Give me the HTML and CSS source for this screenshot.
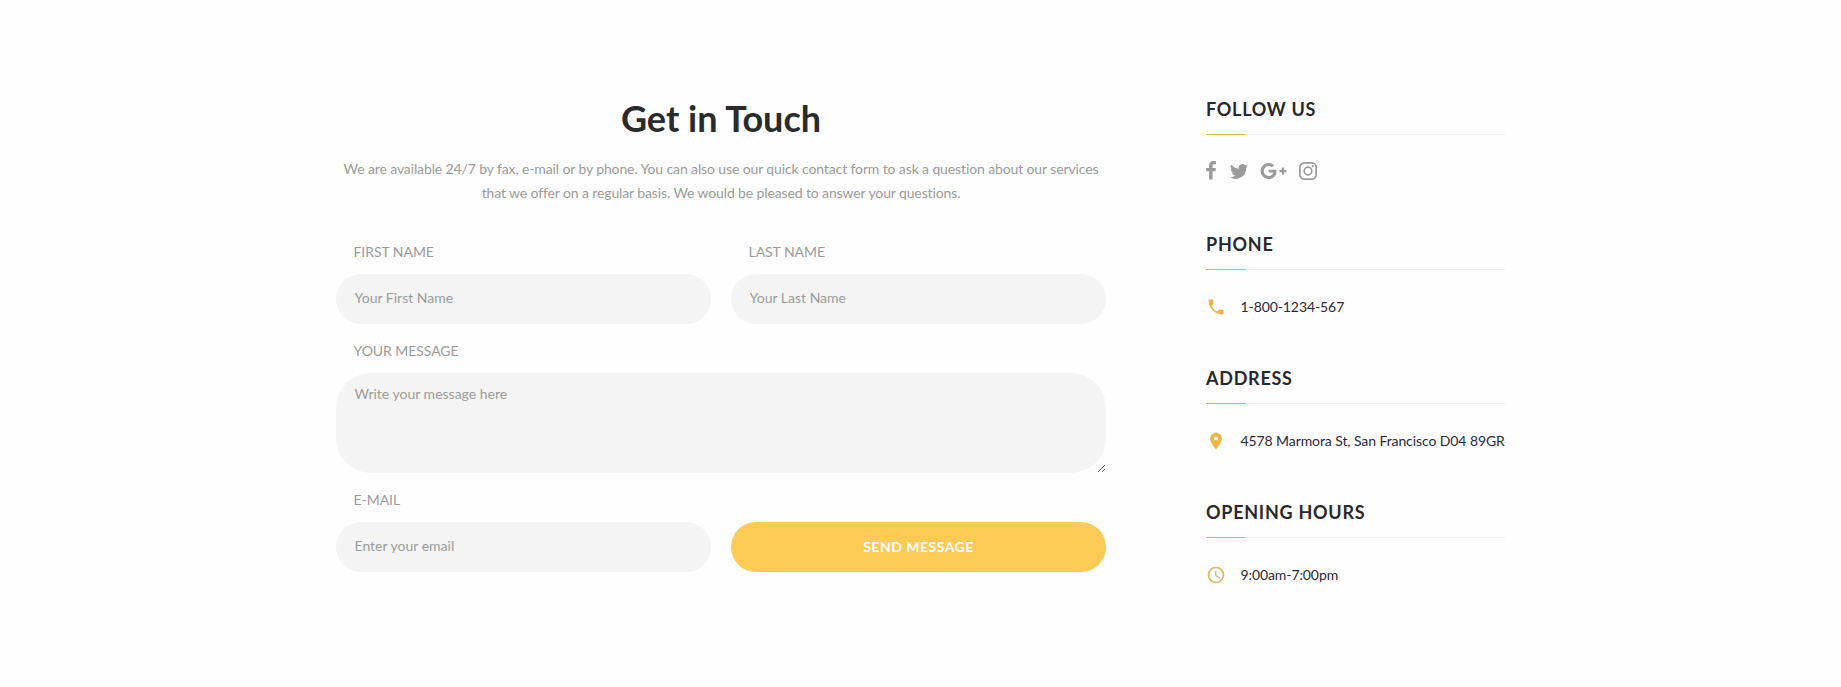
FILE: index.html
```html
<!DOCTYPE html>
<html lang="en">
<head>
<meta charset="utf-8">
<title>Get in Touch</title>
<link rel="stylesheet" href="styles.css">
</head>
<body>
<main class="contact">
  <section class="contact-main">
    <h2 class="title">Get in Touch</h2>
    <p class="intro">We are available 24/7 by fax, e-mail or by phone. You can also use our quick contact form to ask a question about our services that we offer on a regular basis. We would be pleased to answer your questions.</p>
    <form class="form">
      <div class="field">
        <label class="label" for="first">First name</label>
        <input class="input" id="first" type="text" placeholder="Your First Name">
      </div>
      <div class="field">
        <label class="label" for="last">Last name</label>
        <input class="input" id="last" type="text" placeholder="Your Last Name">
      </div>
      <div class="field field-wide">
        <label class="label" for="message">Your message</label>
        <textarea class="input textarea" id="message" placeholder="Write your message here"></textarea>
      </div>
      <div class="field">
        <label class="label" for="email">E-mail</label>
        <input class="input" id="email" type="email" placeholder="Enter your email">
      </div>
      <button class="button" type="button">Send message</button>
    </form>
  </section>
  <aside class="sidebar">
    <section class="block block-social">
      <h3 class="heading">Follow us</h3>
      <div class="social">
        <svg class="facebook" viewBox="0 0 10 19"><path d="M10 .2v3H8.200c-1.400 0-1.650.65-1.650 1.600v2.100h3.300l-.45 3.350H6.550V18.500H3.100v-8.250H.2V6.900h2.900V4.400C3.100 1.600 4.850 0 7.400 0 8.600 0 9.700.1 10 .2z"/></svg>
        <svg class="twitter" viewBox="0 0 24 20"><path d="M24 2.400a10 10 0 0 1-2.800.8A5 5 0 0 0 23.300.5a10 10 0 0 1-3.100 1.200A4.900 4.900 0 0 0 11.800 6.200 14 14 0 0 1 1.700 1a4.900 4.900 0 0 0 1.500 6.600 5 5 0 0 1-2.200-.6c0 2.300 1.600 4.400 3.900 4.900a5 5 0 0 1-2.200.1 4.900 4.900 0 0 0 4.600 3.400A9.900 9.900 0 0 1 0 17.500a14 14 0 0 0 21.500-12.400A10 10 0 0 0 24 2.400z"/></svg>
        <svg class="google" viewBox="0 0 26 16"><path d="M16 8.200C16 12.800 12.900 16 8.200 16A8 8 0 1 1 13.600 2.200L11.400 4.300C10.800 3.700 9.700 3.100 8.200 3.100a4.900 4.900 0 1 0 0 9.800c2.900 0 4.200-2 4.400-3.400H8.200V6.700h7.700c.1.500.1.900.1 1.500zM26 6.900v2.300h-2.300v2.300h-2.400V9.200H19V6.900h2.300V4.600h2.400v2.300z"/></svg>
        <svg class="instagram" viewBox="0 0 18 18"><rect x=".85" y=".85" width="16.300" height="16.300" rx="4.300"/><circle cx="9" cy="9" r="3.800"/><circle class="dot" cx="13.800" cy="4.200" r="1.100"/></svg>
      </div>
    </section>
    <section class="block">
      <h3 class="heading">Phone</h3>
      <p class="info"><svg class="icon" viewBox="0 0 24 24"><path d="M6.620 10.790c1.440 2.830 3.760 5.140 6.590 6.590l2.200-2.200c.27-.27.67-.36 1.020-.24 1.120.37 2.330.57 3.570.57.55 0 1 .45 1 1V20c0 .55-.45 1-1 1C10.610 21 3 13.390 3 4c0-.55.45-1 1-1h3.500c.55 0 1 .45 1 1 0 1.250.2 2.450.57 3.570.11.35.03.74-.25 1.020z"/></svg>1-800-1234-567</p>
    </section>
    <section class="block">
      <h3 class="heading">Address</h3>
      <p class="info"><svg class="icon" viewBox="0 0 24 24"><path d="M12 2C8.130 2 5 5.130 5 9c0 5.250 7 13 7 13s7-7.750 7-13c0-3.870-3.130-7-7-7zm0 9.500a2.500 2.500 0 0 1 0-5 2.500 2.500 0 0 1 0 5z"/></svg>4578 Marmora St, San Francisco D04 89GR</p>
    </section>
    <section class="block">
      <h3 class="heading">Opening hours</h3>
      <p class="info"><svg class="icon clock" viewBox="0 0 24 24"><path d="M12 2a10 10 0 1 0 0 20 10 10 0 0 0 0-20zm0 18a8 8 0 1 1 0-16 8 8 0 0 1 0 16z"/><path class="hands" d="M12.500 7H11v6l5.250 3.150.75-1.230-4.500-2.670z"/></svg>9:00am-7:00pm</p>
    </section>
  </aside>
</main>
</body>
</html>
```
FILE: styles.css
```css
* { box-sizing: border-box; }
body {
  margin: 0;
  background: #fefefe;
  color: #29293a;
  font-family: Lato, "Liberation Sans", sans-serif;
  font-size: 14px;
  line-height: 24px;
}
h2, h3, p { margin: 0; }
.contact {
  display: flex;
  gap: 100px;
  width: 1169px;
  margin: 0 0 0 336px;
  padding-top: 95px;
}
.contact-main { width: 770px; }
.title {
  height: 48px;
  color: #2a2b2d;
  font-size: 36px;
  font-weight: 700;
  line-height: 46px;
  text-align: center;
}
.intro {
  margin-top: 14px;
  color: #9b9b9b;
  letter-spacing: -.12px;
  text-align: center;
}
.form {
  display: grid;
  grid-template-columns: 375px 375px;
  column-gap: 20px;
  margin-top: 35px;
}
.field { display: flex; flex-direction: column; height: 99px; }
.field-wide { grid-column: 1 / -1; height: 149px; }
.label {
  flex: none;
  height: 34px;
  padding: 0 17.500px;
  color: #9b9b9b;
  letter-spacing: -.05px;
  text-transform: uppercase;
}
.input {
  flex: none;
  width: 100%;
  height: 50px;
  padding: 11px 18.500px 15px;
  border: 0;
  border-radius: 25px;
  background: #f4f4f4;
  color: #9b9b9b;
  font: inherit;
}
.input::placeholder { color: #9b9b9b; opacity: 1; }
.textarea { height: 100px; padding: 9px 18.500px; border-radius: 35px; resize: both; }
.button {
  height: 50px;
  margin-top: 34px;
  padding: 0 0 1px;
  border: 0;
  border-radius: 25px;
  background: #fbcb56;
  color: #fff;
  font: inherit;
  font-weight: 700;
  letter-spacing: .5px;
  text-transform: uppercase;
}
.sidebar { width: 299px; }
.block { height: 134px; }
.block-social { height: 135px; }
.heading {
  height: 40px;
  border-bottom: 1px solid #ededed;
  color: #29292d;
  font-size: 18px;
  font-weight: 700;
  line-height: 28px;
  letter-spacing: .74px;
  text-transform: uppercase;
}
.heading::after {
  content: "";
  display: block;
  width: 40px;
  height: 1px;
  margin-top: 11px;
  background: #d8b94f;
}
.social { display: flex; align-items: flex-start; padding-top: 26px; fill: #9b9b9b; }
.facebook { width: 10px; height: 19px; margin-right: 14px; }
.twitter { width: 18px; height: 15px; margin: 3px 12px 0 0; }
.google { width: 27px; height: 16px; margin: 2px 12px 0 0; }
.instagram { width: 18px; height: 18px; margin-top: 1px; fill: none; stroke: #9b9b9b; stroke-width: 1.700; }
.dot { fill: #9b9b9b; stroke: none; }
.info { display: flex; padding-top: 25px; letter-spacing: -.09px; white-space: nowrap; }
.icon { flex: none; width: 20px; height: 20px; margin: 2px 15px 0 -.5px; fill: #edb543; }
.clock { fill: #dfb765; }
.hands { fill: #b8ad98; }
```
